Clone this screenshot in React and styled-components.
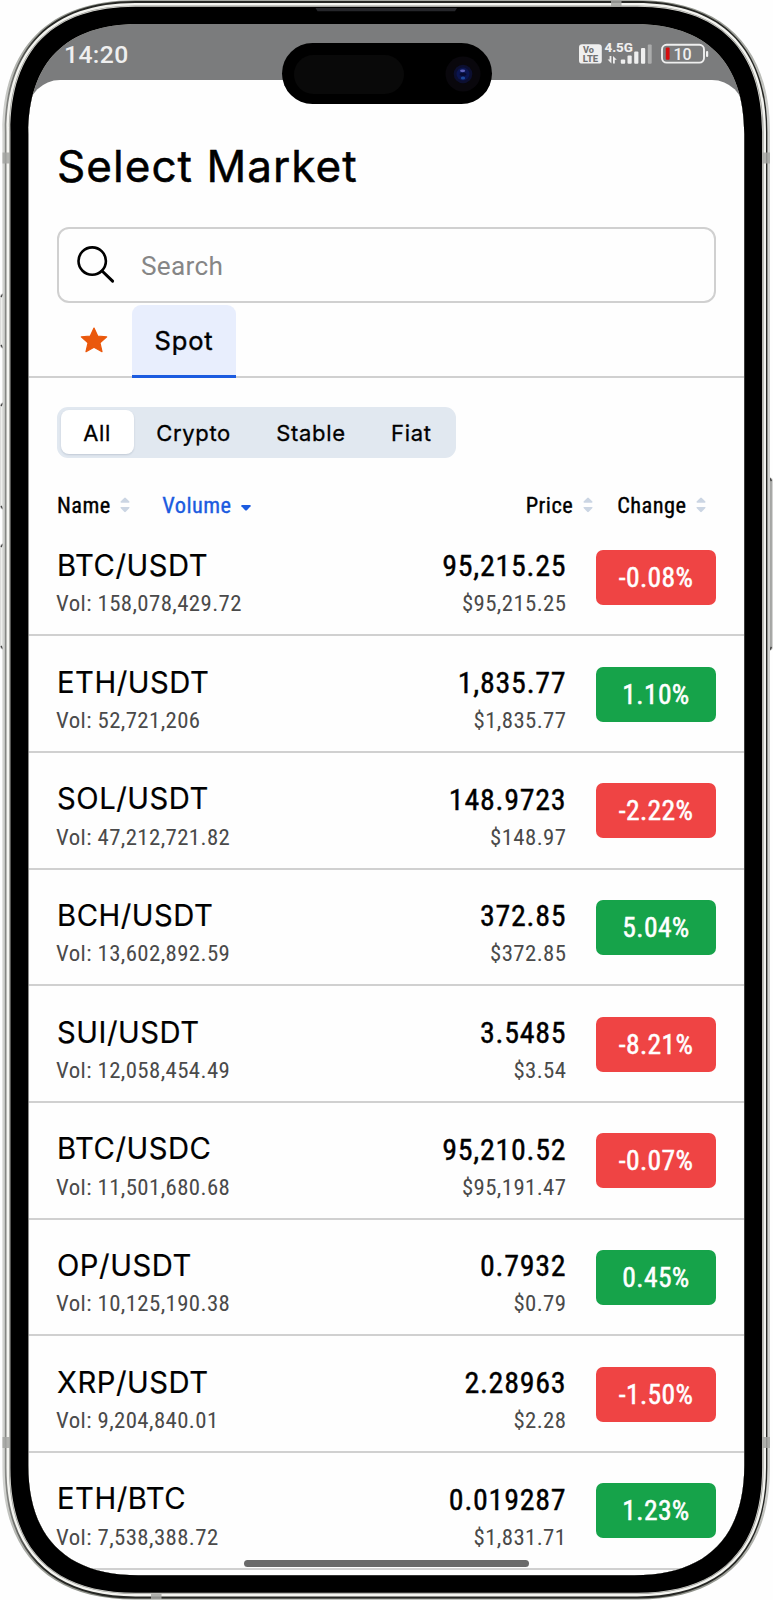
import React, { memo } from 'react';
import styled, { createGlobalStyle, ThemeProvider } from 'styled-components';

const theme = {
  color: {
    text: '#000',
    sub: '#4a4a4a',
    line: '#d0d0d0',
    blue: '#1b5be0',
    up: '#16a34a',
    down: '#ef4444',
  },
  font: {
    inter: "Inter, 'Liberation Sans', sans-serif",
    roboto: "Roboto, 'Liberation Sans', sans-serif",
    condensed: "'Roboto Condensed', Roboto, sans-serif",
  },
};

const GlobalStyle = createGlobalStyle`
  * {
    box-sizing: border-box;
  }
  body {
    margin: 0;
    background: #fefefe;
    overflow: hidden;
  }
  button, input {
    border: 0;
    padding: 0;
    background: none;
    color: inherit;
    outline: none;
  }
`;

const Device = styled.div`
  position: relative;
  width: 773px;
  height: 1600px;
  padding: 24px 29px 25px 28px;
`;

const FrameSvg = styled.svg`
  position: absolute;
  top: 0;
  left: 0;
  pointer-events: none;
`;

const Screen = styled.main`
  height: 1551px;
  overflow: hidden;
  border-radius: 70px;
  background: #7b7c7d;
  display: flex;
  flex-direction: column;
`;

const StatusBar = styled.header`
  flex: none;
  height: 56px;
  padding: 0 35px 0 36px;
  display: flex;
  justify-content: space-between;
  align-items: flex-start;
  color: #efefef;
  .time {
    padding-top: 17px;
    font: 500 24.7px/28px ${(props) => props.theme.font.roboto};
    letter-spacing: 0.4px;
  }
  svg {
    margin-top: 16px;
  }
`;

const Sheet = styled.section`
  flex: 1;
  min-height: 0;
  padding-top: 60px;
  border-radius: 32px 32px 0 0;
  background: #fefefe;
  color: ${(props) => props.theme.color.text};
`;

const Title = styled.h1`
  margin: 0 0 35px 29px;
  font: 400 44px/52px ${(props) => props.theme.font.inter};
  letter-spacing: 1.05px;
  -webkit-text-stroke: 0.5px;
`;

const SearchBox = styled.label`
  display: flex;
  align-items: center;
  height: 76px;
  margin: 0 28px 2px 29px;
  padding-left: 17px;
  border: 2px solid ${(props) => props.theme.color.line};
  border-radius: 12px;
  input {
    flex: 1;
    margin: 2px 0 0 25px;
    font: 400 26.2px/32px ${(props) => props.theme.font.roboto};
    letter-spacing: 0.3px;
    &::placeholder {
      color: #868686;
      opacity: 1;
    }
  }
`;

const Tabs = styled.nav`
  display: flex;
  height: 72.5px;
  margin-bottom: 0.5px;
  padding-left: 29px;
  box-shadow: inset 0 -2px 0 ${(props) => props.theme.color.line};
`;

const StarTab = styled.button`
  width: 75px;
  padding: 0 2px 2px 0;
  display: flex;
  align-items: center;
  justify-content: center;
`;

const Tab = styled.button`
  width: 104px;
  padding-top: 2px;
  border-radius: 9px 9px 0 0;
  border-bottom: 3px solid ${(props) => props.theme.color.blue};
  background: #e8eefd;
  font: 400 25.5px/30px ${(props) => props.theme.font.inter};
  letter-spacing: 0.8px;
  -webkit-text-stroke: 0.4px;
`;

const Segment = styled.div`
  display: flex;
  width: 399px;
  height: 51px;
  margin: 29px 0 35px 29px;
  padding: 3.5px;
  border-radius: 11px;
  background: #e1e8f0;
`;

const SegmentItem = styled.button`
  padding: 1px 22.7px 0;
  border-radius: 8px;
  background: ${(props) => (props.$active ? '#fff' : 'transparent')};
  box-shadow: ${(props) => (props.$active ? '0 1px 2px rgba(30, 50, 80, 0.16)' : 'none')};
  font: 400 22px/28px ${(props) => props.theme.font.inter};
  letter-spacing: 0.65px;
  -webkit-text-stroke: 0.3px;
`;

const ListHead = styled.div`
  display: flex;
  align-items: center;
  height: 25px;
  margin-bottom: 2px;
  padding: 0 38px 0 29px;
`;

const HeadGroup = styled.div`
  display: flex;
  gap: ${(props) => props.$gap}px;
  &:last-child {
    margin-left: auto;
  }
`;

const SortButton = styled.button`
  display: flex;
  align-items: center;
  gap: 9.5px;
  color: ${(props) => (props.$active ? props.theme.color.blue : props.theme.color.text)};
  font: 400 22.4px/25px ${(props) => props.theme.font.condensed};
  letter-spacing: 0.45px;
  -webkit-text-stroke: 0.35px;
`;

const Row = styled.li`
  display: flex;
  align-items: flex-start;
  height: 116.7px;
  padding: 30.4px 28px 0 29px;
  border-bottom: 2px solid ${(props) => props.theme.color.line};
`;

const Pair = styled.div`
  flex: 1;
  padding-top: 1px;
  strong {
    display: block;
    font: 400 29.2px/30px ${(props) => props.theme.font.inter};
    letter-spacing: 0.55px;
    margin-bottom: 10.4px;
    -webkit-text-stroke: 0.2px;
  }
  span {
    margin-left: -1px;
  }
`;

const PriceCol = styled.div`
  padding: 1.4px 29.6px 0 0;
  text-align: right;
  strong {
    display: block;
    font: 400 30px/30px ${(props) => props.theme.font.condensed};
    letter-spacing: 0.75px;
    margin-bottom: 10px;
    -webkit-text-stroke: 0.4px;
  }
`;

const SubText = styled.span`
  display: block;
  font: 400 22.8px/26px ${(props) => props.theme.font.condensed};
  letter-spacing: 0.4px;
  color: ${(props) => props.theme.color.sub};
`;

const Change = styled.div`
  width: 120px;
  height: 55px;
  border-radius: 7px;
  background: ${(props) => (props.$down ? props.theme.color.down : props.theme.color.up)};
  color: #fff;
  text-align: center;
  font: 400 27.6px/55px ${(props) => props.theme.font.condensed};
  letter-spacing: 0.35px;
  -webkit-text-stroke: 0.5px;
`;

const List = styled.ul`
  margin: 0;
  padding: 0;
  list-style: none;
`;

const Island = styled.div`
  position: absolute;
  top: 42.5px;
  left: 282px;
  width: 209.5px;
  height: 61.5px;
  padding: 2px 11px 0 12px;
  border-radius: 31px;
  background: #000;
  display: flex;
  align-items: center;
  justify-content: space-between;
  .sensor {
    width: 110px;
    height: 39px;
    border-radius: 20px;
    background: #090909;
  }
`;

const HomeBar = styled.div`
  position: absolute;
  top: 1560px;
  left: 244px;
  width: 285px;
  height: 6.6px;
  border-radius: 4px;
  background: #6a6a6a;
`;

const markets = [
  { pair: 'BTC/USDT', vol: '158,078,429.72', price: '95,215.25', usd: '$95,215.25', change: '-0.08%' },
  { pair: 'ETH/USDT', vol: '52,721,206', price: '1,835.77', usd: '$1,835.77', change: '1.10%' },
  { pair: 'SOL/USDT', vol: '47,212,721.82', price: '148.9723', usd: '$148.97', change: '-2.22%' },
  { pair: 'BCH/USDT', vol: '13,602,892.59', price: '372.85', usd: '$372.85', change: '5.04%' },
  { pair: 'SUI/USDT', vol: '12,058,454.49', price: '3.5485', usd: '$3.54', change: '-8.21%' },
  { pair: 'BTC/USDC', vol: '11,501,680.68', price: '95,210.52', usd: '$95,191.47', change: '-0.07%' },
  { pair: 'OP/USDT', vol: '10,125,190.38', price: '0.7932', usd: '$0.79', change: '0.45%' },
  { pair: 'XRP/USDT', vol: '9,204,840.01', price: '2.28963', usd: '$2.28', change: '-1.50%' },
  { pair: 'ETH/BTC', vol: '7,538,388.72', price: '0.019287', usd: '$1,831.71', change: '1.23%' },
];

// rounded rectangle with continuous corners, d = corner length, c = handle offset
const squircle = (l, t, r, b, d, c) =>
  `M${l} ${t + d}C${l} ${t + c} ${l + c} ${t} ${l + d} ${t}H${r - d}C${r - c} ${t} ${r} ${t + c} ${r} ${t + d}` +
  `V${b - d}C${r} ${b - c} ${r - c} ${b} ${r - d} ${b}H${l + d}C${l + c} ${b} ${l} ${b - c} ${l} ${b - d}Z`;

const hole = squircle(28.3, 24, 744.3, 1575.3, 110, 38);

const Frame = memo(() => (
  <FrameSvg width="773" height="1600" viewBox="0 0 773 1600" fillRule="evenodd">
    <defs>
      <linearGradient id="rim" gradientUnits="userSpaceOnUse" x1="4" y1="0" x2="40" y2="0">
        <stop offset="0" stopColor="#8a8b88" />
        <stop offset="1" stopColor="#262724" />
      </linearGradient>
      <linearGradient id="edge" gradientUnits="userSpaceOnUse" x1="0" y1="0" x2="0" y2="1600">
        <stop offset="0" stopColor="#8b8e86" />
        <stop offset="0.07" stopColor="#d2d3d0" />
        <stop offset="0.93" stopColor="#d2d3d0" />
        <stop offset="1" stopColor="#8b8e86" />
      </linearGradient>
    </defs>
    {/* side buttons */}
    <g fill="#eeefec" stroke="#c4c5c3" strokeWidth="0.6">
      <rect x="0.4" y="294" width="4" height="54" rx="2" />
      <rect x="0.4" y="403" width="4" height="106" rx="2" />
      <rect x="0.4" y="544" width="4" height="105" rx="2" />
      <rect x="768" y="478" width="4.3" height="172" rx="2" fill="#a5a6a4" />
    </g>
    <path d="M1 297l2-3M1 345l2 3M1 406l2-3M1 506l2 3M1 547l2-3M1 646l2 3M769.5 478l2 3M769.5 650l2-3" stroke="#444" strokeWidth="1.4" />
    <path fill="url(#edge)" d={squircle(2.4, 0.3, 770, 1599.6, 132, 47) + hole} />
    <path fill="url(#rim)" d={squircle(4.8, 1.1, 767.4, 1598.6, 131, 46) + hole} />
    <path fill="#f4f4f0" d={squircle(6.5, 2.9, 766, 1596.4, 129, 45) + hole} />
    <path fill="#9a9b96" d={squircle(9, 5.4, 763.6, 1594, 126, 44) + hole} />
    <path fill="#d8d8d3" d={squircle(9.7, 6, 762.8, 1593.4, 125, 44) + hole} />
    <path fill="#000" d={squircle(10.4, 6.8, 762.1, 1592.8, 125, 43) + hole} />
    {/* antenna bands */}
    <g fill="#a3a4a1" fillOpacity="0.85">
      <rect x="2.5" y="152.5" width="7.5" height="11" />
      <rect x="762.5" y="152.5" width="7.5" height="11" />
      <rect x="2.5" y="1437" width="7.5" height="11" />
      <rect x="762.5" y="1437" width="7.5" height="11" />
      <rect x="611" y="0" width="10.5" height="6" />
      <rect x="151" y="1594" width="10.5" height="5" />
    </g>
    <path d="M315.5 8h141.5l-2 3.2h-137.5z" fill="#25262a" />
  </FrameSvg>
));

const StatusIcons = () => (
  <svg width="131" height="26" viewBox="578 40 131 26" fill="#efefef" fontFamily="Roboto, sans-serif">
    <rect x="579" y="44.2" width="22.8" height="19.4" rx="3.2" />
    <text x="583" y="53.2" fontSize="8.6" fontWeight="800" fill="#707172" textLength="11" lengthAdjust="spacingAndGlyphs">Vo</text>
    <text x="582.8" y="61.6" fontSize="8.6" fontWeight="800" fill="#707172" textLength="15.4" lengthAdjust="spacingAndGlyphs">LTE</text>
    <text x="604.4" y="52.4" fontSize="13" fontWeight="800" textLength="28.6" lengthAdjust="spacingAndGlyphs">4.5G</text>
    <path d="M609.6 56h1.8v7.4l-3.8-3.8h2zM613 63.4v-7.4l3.8 3.8h-2v3.6z" />
    <rect x="620.8" y="59.4" width="4.4" height="4.4" rx="1" />
    <rect x="627.5" y="55.4" width="4.2" height="8.4" rx="1" />
    <rect x="634.2" y="51.6" width="4.2" height="12.2" rx="1" />
    <rect x="641" y="48" width="4.2" height="15.8" rx="1" />
    <rect x="647.8" y="44.6" width="3.9" height="19.2" rx="1" opacity="0.42" />
    <rect x="662" y="44.8" width="42" height="17.8" rx="4.6" fill="none" stroke="#efefef" strokeWidth="1.9" />
    <rect x="665.8" y="47.4" width="3.8" height="12.4" rx="1" fill="#d50d0d" />
    <text x="673.6" y="60" fontSize="16" fontWeight="500" textLength="18" lengthAdjust="spacing">10</text>
    <rect x="706" y="51" width="2.2" height="6" rx="1" />
  </svg>
);

const SortIcon = ({ only }) => (
  <svg width="10" height="16" viewBox="0 0 10 16" fill={only ? '#1b5be0' : '#cbd5e3'}>
    {!only && <path d="M4.2.9Q5 .1 5.8.9L9.4 4.6Q9.9 5.7 8.9 5.8H1.1Q.1 5.7.6 4.6Z" />}
    {only ? (
      <path d="M4.1 13.2Q5 14 5.9 13.2L9.6 9.3Q10.1 8 9 7.9H1Q-.1 8 .4 9.3Z" />
    ) : (
      <path d="M4.2 14.8Q5 15.6 5.8 14.8L9.4 11.1Q9.9 10 8.9 9.9H1.1Q.1 10 .6 11.1Z" />
    )}
  </svg>
);

const Camera = () => (
  <svg width="36" height="36" viewBox="0 0 36 36">
    <circle cx="18" cy="18" r="17.5" fill="#09070c" />
    <circle cx="18" cy="18" r="9.3" fill="#0c0f30" />
    <circle cx="18" cy="18" r="6.5" fill="#0b1550" />
    <ellipse cx="17.6" cy="14.8" rx="2.6" ry="1.4" fill="#5c60b8" />
    <ellipse cx="18" cy="18.3" rx="3.4" ry="1.6" fill="#070a30" />
    <ellipse cx="18" cy="22" rx="2.2" ry="1.5" fill="#1c489c" />
  </svg>
);

const App = () => {
  return (
    <ThemeProvider theme={theme}>
      <GlobalStyle />
      <Device>
        <Screen>
          <StatusBar>
            <span className="time">14:20</span>
            <StatusIcons />
          </StatusBar>

          <Sheet>
            <Title>Select Market</Title>

            <SearchBox>
              <svg width="40" height="40" viewBox="0 0 40 40" fill="none" stroke="#000" strokeWidth="2.6" strokeLinecap="round">
                <circle cx="16.2" cy="16.1" r="13.7" />
                <path d="M26.1 26L36.6 36.2" strokeWidth="3" />
              </svg>
              <input type="text" placeholder="Search" />
            </SearchBox>

            <Tabs>
              <StarTab type="button">
                <svg width="28" height="28" viewBox="0 0 28 28" fill="#ea580c" stroke="#ea580c" strokeWidth="1.2" strokeLinejoin="round">
                  <path d="M14 2L17.7 10L26.7 10.9L20 16.9L22 25.7L14 21.2L6 25.7L8 16.9L1.3 10.9L10.3 10Z" />
                </svg>
              </StarTab>
              <Tab type="button">Spot</Tab>
            </Tabs>

            <Segment>
              <SegmentItem type="button" $active>All</SegmentItem>
              <SegmentItem type="button">Crypto</SegmentItem>
              <SegmentItem type="button">Stable</SegmentItem>
              <SegmentItem type="button">Fiat</SegmentItem>
            </Segment>

            <ListHead>
              <HeadGroup $gap={32}>
                <SortButton type="button">Name<SortIcon /></SortButton>
                <SortButton type="button" $active>Volume<SortIcon only /></SortButton>
              </HeadGroup>
              <HeadGroup $gap={24.5}>
                <SortButton type="button">Price<SortIcon /></SortButton>
                <SortButton type="button">Change<SortIcon /></SortButton>
              </HeadGroup>
            </ListHead>

            <List>
              {markets.map((v) => (
                <Row key={v.pair}>
                  <Pair>
                    <strong>{v.pair}</strong>
                    <SubText>Vol: {v.vol}</SubText>
                  </Pair>
                  <PriceCol>
                    <strong>{v.price}</strong>
                    <SubText>{v.usd}</SubText>
                  </PriceCol>
                  <Change $down={v.change.startsWith('-')}>{v.change}</Change>
                </Row>
              ))}
            </List>
          </Sheet>
        </Screen>
        <HomeBar />
        <Frame />
        <Island>
          <span className="sensor" />
          <Camera />
        </Island>
      </Device>
    </ThemeProvider>
  );
};

export default App;
